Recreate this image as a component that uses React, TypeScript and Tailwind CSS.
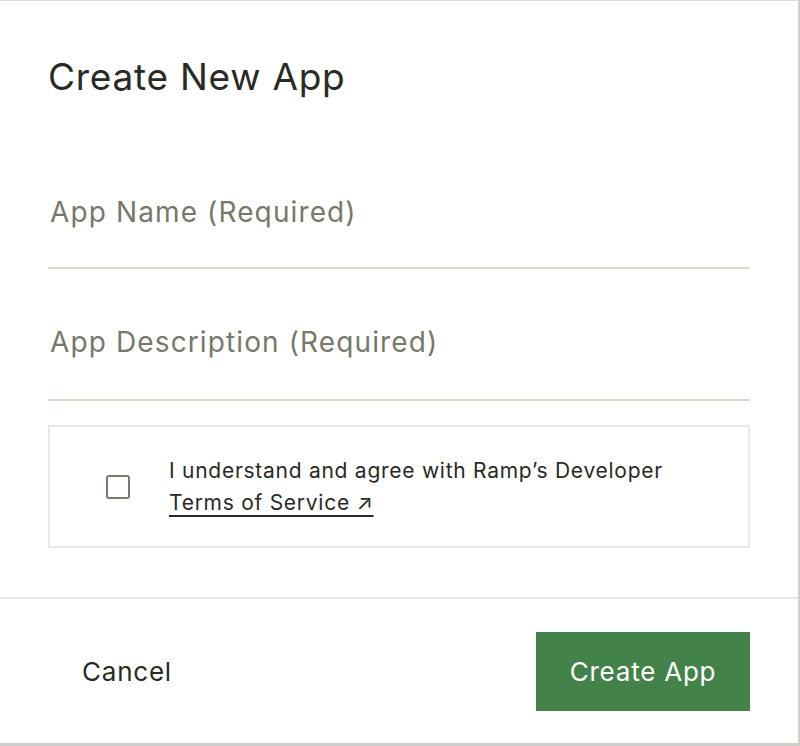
export default function App() {
  return (
    <div className="h-[746px] w-[800px] bg-[#cfcfcc]" style={{ fontFamily: "Inter, 'Liberation Sans', sans-serif" }}>
      <div className="flex h-[743px] w-[798px] flex-col border-t border-[#dcdcd4] bg-white">
        <div className="px-12 pt-[50px]">
          <h1 className="text-[37px] leading-[52px] tracking-[0.02em] text-[#2a2a25]">Create New App</h1>

          <div className="mt-[60px] flex h-[106px] items-center border-b-2 border-[#dddbcd] px-[2px] pb-[6px]">
            <span className="text-[28px] tracking-[0.04em] text-[#77786b]">App Name (Required)</span>
          </div>

          <div className="flex h-[132px] items-center border-b-2 border-[#dddbcd] px-[2px] pt-[16px]">
            <span className="text-[28px] tracking-[0.04em] text-[#77786b]">App Description (Required)</span>
          </div>

          <div className="mt-[24px] flex h-[123px] items-center border-2 border-[#ebe9e5] pl-[56px]">
            <div className="h-[24px] w-[24px] shrink-0 rounded-[3px] border-2 border-[#7a7b6f]" />
            <div className="ml-[39px] text-[21px] leading-[32px] tracking-[0.035em] text-[#2a2a25]">
              <div>I understand and agree with Ramp’s Developer</div>
              <a className="underline decoration-[1.5px] underline-offset-[5px]">Terms of Service ↗</a>
            </div>
          </div>
        </div>

        <div className="mt-[49px] flex flex-1 items-center justify-between border-t-2 border-[#ebe7e3] px-12">
          <button className="px-[34px] text-[26px] tracking-[0.03em] text-[#2a2a25]">Cancel</button>
          <button className="h-[79px] w-[214px] bg-[#43834a] text-[26px] tracking-[0.03em] text-white">Create App</button>
        </div>
      </div>
    </div>
  );
}
